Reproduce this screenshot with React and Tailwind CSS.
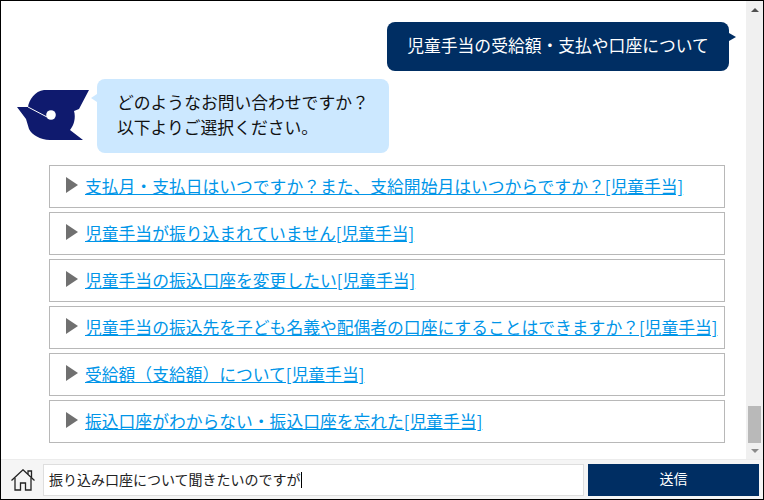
const questions = [
  "支払月・支払日はいつですか？また、支給開始月はいつからですか？[児童手当]",
  "児童手当が振り込まれていません[児童手当]",
  "児童手当の振込口座を変更したい[児童手当]",
  "児童手当の振込先を子ども名義や配偶者の口座にすることはできますか？[児童手当]",
  "受給額（支給額）について[児童手当]",
  "振込口座がわからない・振込口座を忘れた[児童手当]",
];

const font = { fontFamily: '"Noto Sans CJK JP", "Noto Sans", sans-serif' };

function Logo() {
  return (
    <svg width="73" height="51" viewBox="17 90 73 51" className="shrink-0">
      <path
        d="M44 90 L89 90 L79 109 L74 111 C76 118 74 125 70 130 L83 140 L50 140 C40 139.5 32 135 29 129 L26 119 L17 107 L28 107 C29 100 35 91 44 90 Z"
        fill="#0f1a6e"
      />
      <path d="M28 107 L47 117" stroke="#fff" strokeWidth="1" />
      <circle cx="51" cy="115" r="4.8" fill="#fff" />
    </svg>
  );
}

function HomeIcon() {
  return (
    <svg width="24" height="22" viewBox="0 0 24 22" fill="none" stroke="#222" strokeWidth="1.3" strokeLinejoin="miter">
      <path d="M0.5 11.5 L12 0.8 L23.5 11.5" />
      <path d="M17 5 V2 H20.5 V8.5" />
      <path d="M4 9 V21 H9.5 V14 H14.5 V21 H20 V9" />
    </svg>
  );
}

export default function App() {
  return (
    <div className="w-[764px] h-[500px] border border-black bg-white flex flex-col overflow-hidden" style={font}>
      <div className="flex-1 flex min-h-0">
        <div className="flex-1 min-w-0 flex flex-col pt-[21px] pl-[16px] pr-[21px]">
          <div className="flex justify-end mr-[-4px]">
            <div className="relative w-[342px] h-[49px] rounded-[8px] bg-[#002e63] text-white text-[16.8px] flex items-center justify-center pb-[1px]">
              児童手当の受給額・支払や口座について
              <span className="absolute right-[-7px] top-[11px] w-0 h-0 border-y-[4px] border-y-transparent border-l-[7px] border-l-[#002e63]" />
            </div>
          </div>
          <div className="flex mt-[8px]">
            <div className="mt-[11px] w-[80px] shrink-0"><Logo /></div>
            <div className="relative w-[292px] h-[74px] rounded-[8px] bg-[#cce8ff] text-[16.8px] leading-[25px] text-[#111] pl-[20px] pt-[11px]">
              <span className="absolute left-[-6px] top-[15px] w-0 h-0 border-y-[4px] border-y-transparent border-r-[6px] border-r-[#cce8ff]" />
              <div>どのようなお問い合わせですか？</div>
              <div>以下よりご選択ください。</div>
            </div>
          </div>
          <div className="mt-[12px] ml-[32px] flex flex-col gap-[4px]">
            {questions.map((q) => (
              <div key={q} className="h-[43px] border border-[#b8b8b8] flex items-center pl-[16px] bg-white">
                <span className="w-0 h-0 border-y-[8px] border-y-transparent border-l-[12px] border-l-[#707070] mr-[7px] shrink-0 mt-[-3px]" />
                <a href="#" className="text-[16.8px] text-[#0095e8] underline whitespace-nowrap">{q}</a>
              </div>
            ))}
          </div>
        </div>
        <div className="w-[17px] bg-[#f0f0f0] flex flex-col items-center">
          <span className="mt-[7px] w-0 h-0 border-x-[4px] border-x-transparent border-b-[4px] border-b-[#505050]" />
          <div className="flex-1" />
          <div className="w-[13px] h-[37px] bg-[#b9b9b9]" />
          <span className="mt-[6px] mb-[6px] w-0 h-0 border-x-[4px] border-x-transparent border-t-[4px] border-t-[#8a8a8a]" />
        </div>
      </div>
      <div className="h-[40px] shrink-0 bg-[#f5f5f5] border-t border-[#ececec] flex items-center pl-[10px]">
        <div className="w-[32px] shrink-0 flex"><HomeIcon /></div>
        <div className="w-[541px] h-[32px] bg-white border border-[#dedede] flex items-center pl-[5px] text-[14px] text-[#222]">
          振り込み口座について聞きたいのですが<span className="inline-block w-px h-[16px] bg-black" />
        </div>
        <div className="ml-[4px] w-[171px] h-[32px] bg-[#002e63] text-white text-[14px] flex items-center justify-center pb-[2px]">送信</div>
      </div>
    </div>
  );
}
